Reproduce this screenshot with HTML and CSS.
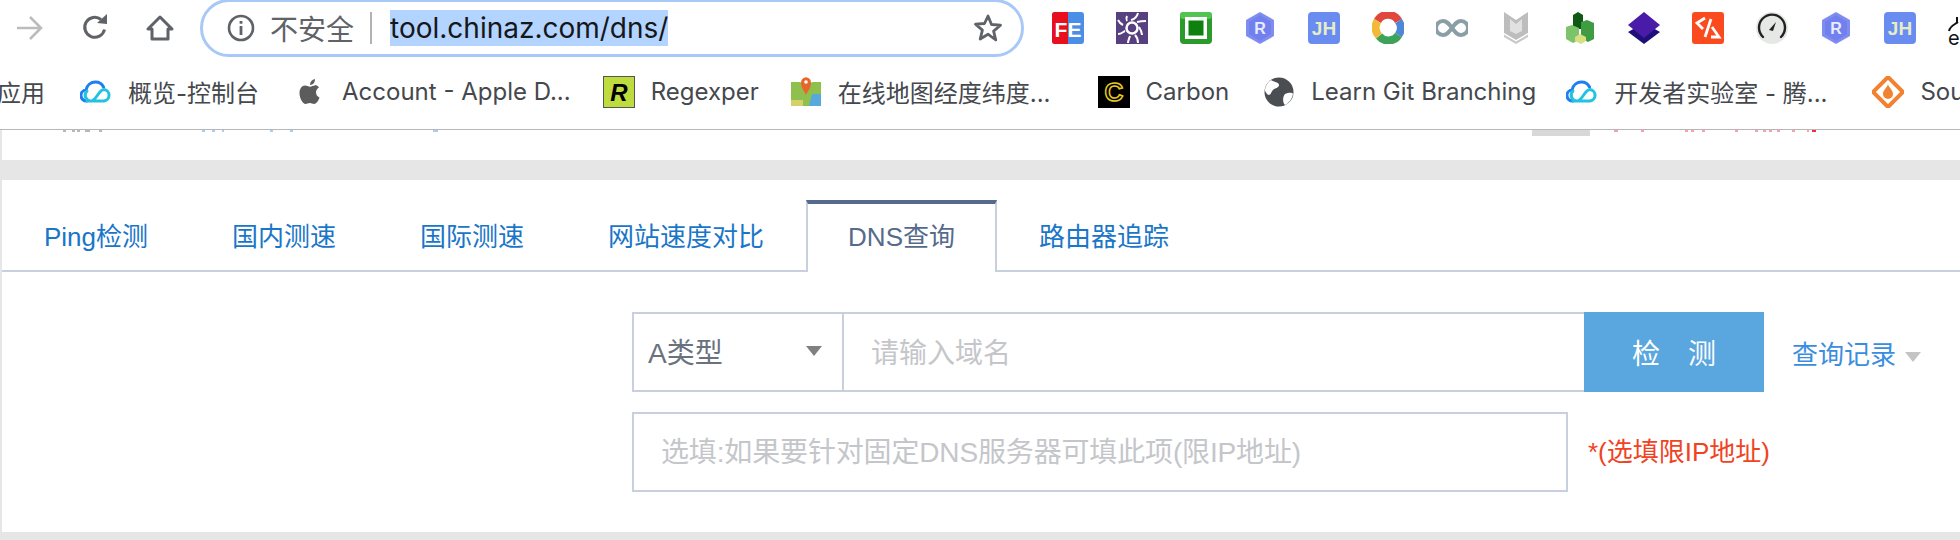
FILE: index.html
```html
<!DOCTYPE html>
<html lang="zh-CN">

<head>
    <meta charset="UTF-8">
    <title>DNS查询</title>
    <link rel="stylesheet" href="styles.css">
</head>

<body>
    <svg class="defs" width="0" height="0">
        <symbol id="cloud" viewBox="0 0 32 32">
            <path d="M7 25a5.500 5.500 0 0 1-1-11C7 9 11 6 15.500 6c3.500 0 6.500 2 8 5" fill="none" stroke="#1e7ff0" stroke-width="3" stroke-linecap="round"/>
            <path d="M7 25h17a5.800 5.800 0 0 0 0-11.500c-5 0-8 11.500-13 11.500a5.800 5.800 0 0 1-4-10" fill="none" stroke="#22c3e0" stroke-width="3" stroke-linecap="round"/>
        </symbol>
    </svg>

    <div class="toolbar">
        <div class="nav-btns">
            <svg class="nav-ico" viewBox="0 0 28 28"><path d="M1 14h24M14 3l11 11-11 11" fill="none" stroke="#bcbcbc" stroke-width="2.600"/></svg>
            <svg class="nav-ico" viewBox="0 0 28 28"><path d="M23.500 15.500A10 10 0 1 1 20 5.500" fill="none" stroke="#5f6368" stroke-width="3"/><path d="M16 9 26 10V0z" fill="#5f6368"/></svg>
            <svg class="nav-ico" viewBox="0 0 28 28"><path d="M14 3 2 15h4v10h16V15h4z" fill="none" stroke="#5f6368" stroke-width="3" stroke-linejoin="round"/></svg>
        </div>
        <div class="omnibox">
            <svg class="info-ico" viewBox="0 0 28 28"><circle cx="14" cy="14" r="12" fill="none" stroke="#5f6368" stroke-width="2.600"/><path d="M14 12v9M14 7v2.800" stroke="#5f6368" stroke-width="2.800"/></svg>
            <span class="insecure">不安全</span>
            <span class="omni-sep"></span>
            <span class="url">tool.chinaz.com/dns/</span>
            <svg class="star-ico" viewBox="0 0 30 30"><path d="M15 3l3.500 8.500 9 .7-6.900 5.900 2.200 8.900L15 21.200 7.200 26l2.200-8.900L2.500 11.200l9-.7z" fill="none" stroke="#5f6368" stroke-width="2.800" stroke-linejoin="round"/></svg>
        </div>
        <div class="ext-icons">
            <svg class="ext" viewBox="0 0 32 32"><rect width="32" height="32" rx="3" fill="#4a8ee8"/><path d="M3 0h13v32H3a3 3 0 0 1-3-3V3a3 3 0 0 1 3-3z" fill="#e80f1f"/><text x="16" y="25" class="ico-txt" font-size="21" fill="#fff">FE</text></svg>
            <svg class="ext" viewBox="0 0 32 32"><rect width="32" height="32" fill="#56407f"/><circle cx="16" cy="16" r="5.500" fill="none" stroke="#fff" stroke-width="2.500"/><path d="M15 8C19 7 21 5 22 1M21 10c4-1 6-1 9-1M23 15c2 3 3 5 3 8M19 23c2 2 3 5 3 8M14 24c-1 3-2 5-2 7M9 19c-2 1-4 3-7 3M7 13C5 12 3 10 2 8M11 9C10 7 10 6 11 4" stroke="#fff" stroke-width="2" fill="none"/></svg>
            <svg class="ext" viewBox="0 0 32 32"><rect width="32" height="32" rx="4" fill="#2a9a2a"/><rect x="0" y="0" width="32" height="7" rx="3" fill="#52c452"/><rect x="5" y="5" width="22" height="22" fill="#fff"/><rect x="8.500" y="8.500" width="15" height="15" fill="#0d800d"/></svg>
            <svg class="ext" viewBox="0 0 32 32"><path d="M16 0 30 8v16l-14 8-14-8V8z" fill="#7f8cf2"/><path d="M16 3 27 9.500v13L16 29 5 22.500v-13z" fill="#7280ee"/><text x="16" y="22" class="ico-txt" font-size="16" fill="#e8ecff">R</text></svg>
            <svg class="ext" viewBox="0 0 32 32"><rect width="32" height="32" rx="4" fill="#6a8cf0"/><text x="16" y="23" class="ico-txt" font-size="19" fill="#e6ecc8">JH</text></svg>
            <svg class="ext" viewBox="0 0 32 32"><g fill="none" stroke-width="8"><path d="M5.500 9A12 12 0 0 1 26.500 9" stroke="#e0483e"/><path d="M26.500 9A12 12 0 0 1 26.500 23" stroke="#4f87d8"/><path d="M26.500 23A12 12 0 0 1 7 24" stroke="#3da35a"/><path d="M7 24A12 12 0 0 1 5.500 9" stroke="#f2b838"/></g></svg>
            <svg class="ext" viewBox="0 0 32 32"><path d="M16 16c-3-4-5-7-9-7a7 7 0 0 0 0 14c4 0 6-3 9-7s5-7 9-7a7 7 0 0 1 0 14c-4 0-6-3-9-7z" fill="none" stroke="#8a9ea6" stroke-width="4"/></svg>
            <svg class="ext" viewBox="0 0 32 32"><path d="M4 0l12 8 12-8v21l-12 7-12-7z" fill="#bdbdbd"/><path d="M10 7v12l6 3 6-3V7l-6 5z" fill="#fff" opacity=".55"/><path d="M4 21l12 7 12-7v4l-12 7-12-7z" fill="#fff" opacity=".4"/><path d="M4 22.500l12 7 12-7v2.500l-12 7-12-7z" fill="#c8c8c8"/></svg>
            <svg class="ext" viewBox="0 0 32 32"><path d="M9 3l5-3 5 3v14H9z" fill="#0f5a12"/><path d="M17 10l6-2 7 3v16l-6 3-7-4z" fill="#3f9c43"/><path d="M2 15l6-2 7 3v12l-6 3-7-4z" fill="#7cc36a"/><path d="M11 25l5-3 6 3v4l-5 3-6-3z" fill="#d6e080"/></svg>
            <svg class="ext" viewBox="0 0 32 32"><path d="M16 11 32 20 16 32 0 20z" fill="#1f0f78"/><path d="M16 0 32 13 16 26 0 13z" fill="#4a1aa8"/></svg>
            <svg class="ext" viewBox="0 0 32 32"><rect width="32" height="32" rx="3" fill="#fb4a1e"/><path d="M13 6 5 11l6 6M19 7l-6 18M20 15l7 10-8 0" fill="none" stroke="#fff" stroke-width="2.800"/></svg>
            <svg class="ext" viewBox="0 0 32 32"><circle cx="16" cy="16" r="16" fill="#e6e8e6"/><path d="M7 25A13 13 0 1 1 25 25" fill="none" stroke="#222" stroke-width="2.400" stroke-linecap="round"/><path d="M13 18l7-8-3 9z" fill="#222"/></svg>
            <svg class="ext" viewBox="0 0 32 32"><path d="M16 0 30 8v16l-14 8-14-8V8z" fill="#7f8cf2"/><path d="M16 3 27 9.500v13L16 29 5 22.500v-13z" fill="#7280ee"/><text x="16" y="22" class="ico-txt" font-size="16" fill="#e8ecff">R</text></svg>
            <svg class="ext" viewBox="0 0 32 32"><rect width="32" height="32" rx="4" fill="#6a8cf0"/><text x="16" y="23" class="ico-txt" font-size="19" fill="#e6ecc8">JH</text></svg>
            <div class="ext-en">
                <svg class="ext-en-curve" viewBox="0 0 12 16"><path d="M1 15c1-5 5-6 9-9M9 1v5" fill="none" stroke="#111" stroke-width="2"/></svg>
                <span>en</span>
            </div>
        </div>
    </div>

    <div class="bookmarks">
        <span class="bm-text bm-apps">应用</span>
        <div class="bm bm-cloud1">
            <svg class="bm-ico"><use href="#cloud"/></svg>
            <span class="bm-text">概览-控制台</span>
        </div>
        <div class="bm bm-apple">
            <svg class="bm-ico" viewBox="0 0 32 32"><path d="M21 9.500c-2 0-3.300 1.200-5 1.200S13 9.500 11 9.500c-3 0-5.500 3-5.500 7.500 0 5.500 3.500 11 6 11 1.500 0 2.400-1 4.300-1s2.700 1 4.300 1c2.500 0 4.600-4 5.400-6.500-4.500-2-4.600-8-.5-10-1-1.600-2.500-2.500-4-2.500z" fill="#5c5c5c"/><path d="M16 9c0-3 2-5.500 5-6 .2 3-2 6-5 6z" fill="#5c5c5c"/></svg>
            <span class="bm-text">Account - Apple D...</span>
        </div>
        <div class="bm bm-regex">
            <svg class="bm-ico" viewBox="0 0 32 32"><rect x=".5" y=".5" width="31" height="31" fill="#bfdc3e" stroke="#555"/><text x="16" y="25" class="ico-txt ico-italic" font-size="24" fill="#000">R</text></svg>
            <span class="bm-text">Regexper</span>
        </div>
        <div class="bm bm-map">
            <svg class="bm-ico" viewBox="0 0 32 32"><path d="M1 6h9l6 2 7-2h8v24H1z" fill="#8fc04e"/><path d="M22 18h9v12H19z" fill="#57a8dc"/><path d="M1 24h12v6H1z" fill="#d6d06a"/><path d="M16 18c-3-5-5-7-5-11a5 5 0 0 1 10 0c0 4-2 6-5 11z" fill="#e8662c" transform="translate(0 -1) scale(1 1.100)"/><circle cx="16" cy="6" r="1.800" fill="#fff"/></svg>
            <span class="bm-text">在线地图经度纬度...</span>
        </div>
        <div class="bm bm-carbon">
            <svg class="bm-ico" viewBox="0 0 32 32"><rect width="32" height="32" fill="#000"/><text x="16" y="25" class="ico-txt ico-outline" font-size="26">C</text></svg>
            <span class="bm-text">Carbon</span>
        </div>
        <div class="bm bm-globe">
            <svg class="bm-ico" viewBox="0 0 32 32"><circle cx="16" cy="16" r="14.500" fill="#4a4d52"/><path d="M8 4c3 2 8 2 8 5s-4 3-6 5-2 5-4 5-3-3-4-4c0-5 3-9 6-11zM22 18c3-1 7-2 8 0-1 5-4 9-8 11-3-3-2-9 0-11z" fill="#fff"/></svg>
            <span class="bm-text">Learn Git Branching</span>
        </div>
        <div class="bm bm-cloud2">
            <svg class="bm-ico"><use href="#cloud"/></svg>
            <span class="bm-text">开发者实验室 - 腾...</span>
        </div>
        <div class="bm bm-source">
            <svg class="bm-ico" viewBox="0 0 32 32"><path d="M16 1 31 16 16 31 1 16z" fill="none" stroke="#f08232" stroke-width="4"/><path d="M16 8c1 4 5 6 5 10a5 5 0 0 1-10 0c0-4 4-6 5-10z" fill="#f08232"/></svg>
            <span class="bm-text">Sou</span>
        </div>
    </div>

    <div class="page">
        <svg class="top-strip" viewBox="0 0 1958 30">
            <g fill="#b8b8b8">
                <rect x="61" width="3" height="2"/><rect x="70" width="3" height="2"/><rect x="75" width="3" height="2"/><rect x="83" width="5" height="2"/><rect x="97" width="3" height="2"/>
            </g>
            <g fill="#a8cdf0">
                <rect x="200" width="3" height="2"/><rect x="210" width="3" height="2"/><rect x="220" width="2" height="2"/><rect x="268" width="3" height="2"/><rect x="288" width="3" height="2"/><rect x="431" width="5" height="2"/>
            </g>
            <rect x="1530" width="58" height="6" fill="#d8d8d8"/>
            <g fill="#f8a0a8">
                <rect x="1612" width="4" height="2"/><rect x="1639" width="3" height="2"/><rect x="1683" width="3" height="2"/><rect x="1689" width="3" height="2"/><rect x="1700" width="3" height="2"/><rect x="1733" width="3" height="2"/><rect x="1753" width="3" height="2"/><rect x="1761" width="3" height="2"/><rect x="1767" width="3" height="2"/><rect x="1775" width="3" height="2"/><rect x="1790" width="3" height="2"/><rect x="1805" width="2" height="2"/><rect x="1810" width="4" height="2" fill="#f03040"/>
            </g>
        </svg>

        <div class="panel">
            <div class="tabs">
                <a class="tab">Ping检测</a>
                <a class="tab">国内测速</a>
                <a class="tab">国际测速</a>
                <a class="tab">网站速度对比</a>
                <a class="tab active">DNS查询</a>
                <a class="tab">路由器追踪</a>
            </div>

            <div class="query">
                <div class="query-row">
                    <div class="type-select">
                        <span>A类型</span>
                        <i class="caret"></i>
                    </div>
                    <input class="domain-input" type="text" placeholder="请输入域名">
                    <button class="check-btn">检　测</button>
                    <a class="history">查询记录<i class="caret caret-small"></i></a>
                </div>
                <div class="query-row">
                    <input class="server-input" type="text" placeholder="选填:如果要针对固定DNS服务器可填此项(限IP地址)">
                    <span class="hint">*(选填限IP地址)</span>
                </div>
            </div>
        </div>
    </div>
</body>

</html>
```

FILE: styles.css
```css
* {
    box-sizing: border-box;
}

html,
body {
    margin: 0;
    height: 540px;
    overflow: hidden;
}

body {
    width: 1960px;
    background-color: #e6e6e6;
    font-family: "Liberation Sans", "Noto Sans CJK SC", sans-serif;
}

.defs {
    position: absolute;
}

.ico-txt {
    font-family: "Liberation Sans", sans-serif;
    font-weight: 700;
    text-anchor: middle;
}

.ico-italic {
    font-style: italic;
}

.ico-outline {
    fill: none;
    stroke: #e6c820;
    stroke-width: 1.500;
}

/* browser toolbar */
.toolbar {
    display: flex;
    align-items: flex-start;
    height: 60px;
    background-color: #fff;
    font-family: Inter, "Noto Sans CJK SC", sans-serif;
}

.nav-btns {
    display: flex;
    flex: none;
    gap: 37px;
    width: 200px;
    padding: 14px 0 0 16px;
}

.nav-ico {
    width: 28px;
    height: 28px;
}

.omnibox {
    display: flex;
    flex: none;
    align-items: center;
    width: 824px;
    height: 58px;
    margin-top: -1px;
    padding: 0 18px 0 24px;
    border: 3px solid #a8c8f8;
    border-radius: 29px;
}

.info-ico {
    width: 28px;
    height: 28px;
}

.insecure {
    margin-left: 15px;
    font-size: 28px;
    color: #5f6368;
}

.omni-sep {
    width: 2px;
    height: 32px;
    margin: 0 18px 0 16px;
    background-color: #b0b2b6;
}

.url {
    height: 36px;
    font-size: 28px;
    line-height: 36px;
    color: #15171a;
    background-color: #b3d4fe;
}

.star-ico {
    width: 30px;
    height: 30px;
    margin-left: auto;
}

.ext-icons {
    display: flex;
    gap: 32px;
    padding: 12px 0 0 28px;
}

.ext {
    flex: none;
    width: 32px;
    height: 32px;
}

.ext-en {
    position: relative;
    width: 32px;
    height: 32px;
    color: #111;
    font-size: 20px;
    line-height: 20px;
}

.ext-en span {
    position: absolute;
    top: 16px;
    left: 0;
}

.ext-en-curve {
    position: absolute;
    top: 4px;
    left: 0;
    width: 12px;
    height: 16px;
}

/* bookmarks */
.bookmarks {
    display: flex;
    align-items: center;
    height: 70px;
    padding-bottom: 6px;
    border-bottom: 1px solid #b8b8b8;
    background-color: #fff;
    font-family: Inter, "Noto Sans CJK SC", sans-serif;
    white-space: nowrap;
    overflow: hidden;
}

.bm {
    display: flex;
    flex: none;
    align-items: center;
    gap: 16px;
}

.bm-ico {
    flex: none;
    width: 32px;
    height: 32px;
}

.bm-text {
    font-size: 24px;
    color: #45484d;
}

.bm-apps {
    margin-left: -3px;
}

.bm-cloud1 {
    margin-left: 35px;
}

.bm-apple {
    margin-left: 35px;
}

.bm-regex {
    margin-left: 32px;
}

.bm-map {
    margin-left: 31px;
}

.bm-carbon {
    margin-left: 47px;
}

.bm-globe {
    margin-left: 34px;
}

.bm-cloud2 {
    margin-left: 30px;
}

.bm-source {
    margin-left: 45px;
}

/* page */
.page {
    padding-left: 2px;
}

.top-strip {
    display: block;
    width: 1958px;
    height: 30px;
    margin-bottom: 20px;
    background-color: #fff;
}

.panel {
    height: 352px;
    padding-top: 20px;
    background-color: #fff;
}

.tabs {
    display: flex;
    height: 72px;
    border-bottom: 2px solid #c8d0e0;
}

.tab {
    height: 71px;
    padding: 4px 40px 0;
    border: solid transparent;
    border-width: 0 2px;
    font-size: 26px;
    line-height: 67px;
    color: #1a76c8;
}

.tab.active {
    height: 72px;
    padding-top: 0;
    border-color: #c8d0e0;
    border-top: 4px solid #566a8c;
    background-color: #fff;
    color: #566a8c;
}

.query {
    display: flex;
    flex-direction: column;
    gap: 20px;
    padding: 40px 0 0 630px;
}

.query-row {
    display: flex;
    align-items: center;
    height: 80px;
}

.type-select {
    display: flex;
    align-items: center;
    justify-content: space-between;
    width: 212px;
    height: 80px;
    padding: 0 20px 2px 14px;
    border: 2px solid #c8d0e0;
    font-size: 28px;
    color: #6a7280;
}

.caret {
    width: 0;
    height: 0;
    border: solid transparent;
    border-width: 10px 8px 0;
    border-top-color: #808080;
}

.caret-small {
    display: inline-block;
    margin-left: 9px;
    vertical-align: middle;
    border-top-color: #c4c4c4;
}

input {
    height: 80px;
    border: 2px solid #c8d0e0;
    outline: none;
    font-family: inherit;
    font-size: 28px;
    background-color: #fff;
}

input::placeholder {
    color: #c4c6ca;
}

.domain-input {
    width: 740px;
    padding: 4px 0 0 27px;
    border-left: none;
    border-right: none;
}

.check-btn {
    width: 180px;
    height: 80px;
    border: none;
    font-family: inherit;
    font-size: 28px;
    color: #fff;
    background-color: #5aa7e0;
}

.history {
    margin-left: 28px;
    font-size: 26px;
    color: #3b8de0;
}

.server-input {
    width: 936px;
    padding: 2px 0 0 27px;
    letter-spacing: -0.15px;
}

.hint {
    margin: 0 0 6px 20px;
    font-size: 26px;
    color: #f0431f;
}
```
